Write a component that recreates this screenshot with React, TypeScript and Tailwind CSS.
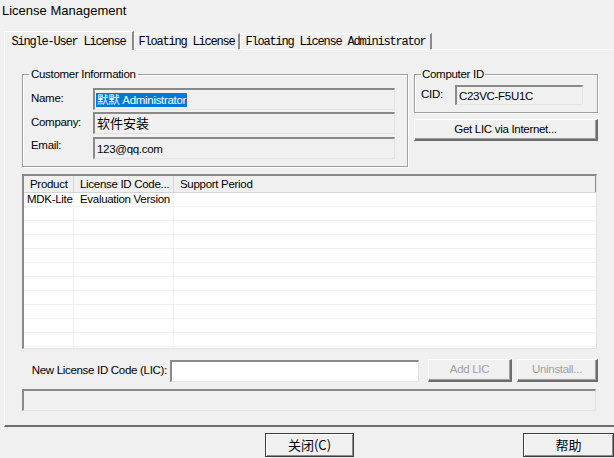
import React from "react";

const sunken =
  "border-t-2 border-l-2 border-t-[#8a8a8a] border-l-[#8a8a8a] border-r border-b border-r-[#e3e3e3] border-b-[#e3e3e3]";
const raised =
  "border-t border-l border-t-white border-l-white border-r-2 border-b-2 border-r-[#6d6d6d] border-b-[#6d6d6d] shadow-[inset_-1px_-1px_0_#a0a0a0]";
const groupBox =
  "border border-[#a0a0a0] shadow-[inset_1px_1px_0_white,1px_1px_0_white] rounded-none";

const rows = [
  ["MDK-Lite", "Evaluation Version", ""],
  ...Array.from({ length: 11 }, () => ["", "", ""]),
];

function Field({ children, width, height = 22 }: { children?: React.ReactNode; width: string; height?: number }) {
  return (
    <div
      className={`${sunken} ${width} ${height === 22 ? "h-[22px]" : "h-[20px]"} bg-[#f0f0f0] flex items-center pl-[1px] leading-[14px] whitespace-nowrap overflow-hidden`}
    >
      {children}
    </div>
  );
}

export default function App() {
  const tabFont = "font-['Liberation_Mono',monospace] text-[12px] tracking-[-1.2px] whitespace-nowrap";
  return (
    <div className="w-[614px] h-[458px] bg-[#f0f0f0] overflow-hidden font-['Liberation_Sans','Noto_Sans_CJK_SC',sans-serif] text-[11.5px] tracking-[-0.3px] text-black">
      {/* Title */}
      <div className="h-[31px] pl-[2px] pt-[3px] text-[13px] tracking-normal leading-[16px]">License Management</div>

      {/* Tabs */}
      <div className="flex items-end h-[18px] pl-[4px]">
        <div className={`relative z-10 w-[130px] h-[19px] -mb-[1px] bg-[#f0f0f0] border-t border-l border-white border-r-2 border-r-[#8a8a8a] flex items-start justify-center pt-[1px] ${tabFont}`}>
          Single-User License
        </div>
        <div className={`w-[106px] h-[16px] border-t border-l border-white border-r-2 border-r-[#8a8a8a] flex items-center justify-center ${tabFont}`}>
          Floating License
        </div>
        <div className={`w-[192px] h-[16px] border-t border-l border-white border-r-2 border-r-[#8a8a8a] flex items-center justify-center ${tabFont}`}>
          Floating License Administrator
        </div>
      </div>

      {/* Panel */}
      <div className="ml-[4px] w-[620px] h-[378px] border-t border-l border-white border-b-2 border-r-2 border-b-[#6d6d6d] border-r-[#6d6d6d] pl-[17px] pt-[17px]">
        <div className="flex items-start">
          {/* Customer Information */}
          <fieldset className={`${groupBox} w-[386px] h-[100px]`}>
            <legend className="ml-[6px] px-[2px] leading-[14px]">Customer Information</legend>
            <div className="flex flex-col pl-[8px] pt-[7px]">
              <div className="flex items-center">
                <span className="w-[62px]">Name:</span>
                <Field width="w-[302px]">
                  <span className="bg-[#0078d7] text-white px-[1px]">默默 Administrator</span>
                </Field>
              </div>
              <div className="flex items-center mt-[2px]">
                <span className="w-[62px]">Company:</span>
                <Field width="w-[302px]">
                  <span className="pl-[1px] text-[13px] tracking-normal">软件安装</span>
                </Field>
              </div>
              <div className="flex items-center mt-[3px]">
                <span className="w-[62px] -mt-[4px]">Email:</span>
                <Field width="w-[302px]">
                  <span className="pl-[1px]">123@qq.com</span>
                </Field>
              </div>
            </div>
          </fieldset>

          {/* Computer ID */}
          <div className="ml-[6px] flex flex-col">
            <fieldset className={`${groupBox} w-[184px] h-[46px]`}>
              <legend className="ml-[6px] px-[1px] leading-[14px]">Computer ID</legend>
              <div className="flex items-center pl-[6px] pt-[4px]">
                <span className="w-[34px]">CID:</span>
                <Field width="w-[128px]" height={20}>
                  <span className="pl-[1px]">C23VC-F5U1C</span>
                </Field>
              </div>
            </fieldset>
            <button className={`${raised} mt-[6px] w-[184px] h-[22px] bg-[#f0f0f0] flex items-center justify-center`}>
              Get LIC via Internet...
            </button>
          </div>
        </div>

        {/* License list */}
        <div className={`${sunken} mt-[7px] w-[575px] h-[175px] bg-white overflow-hidden`}>
          <div className="flex h-[17px] bg-[#f0f0f0] border-b border-[#d5d5d5] leading-[16px] whitespace-nowrap">
            <div className="w-[50px] pl-[6px] border-r border-[#d5d5d5] overflow-hidden">Product</div>
            <div className="w-[100px] pl-[6px] border-r border-[#d5d5d5] overflow-hidden">License ID Code...</div>
            <div className="flex-1 pl-[6px] border-r border-[#8a8a8a]">Support Period</div>
          </div>
          {rows.map((r, i) => (
            <div key={i} className="flex h-[14px] border-b border-[#f0f0f0] leading-[13px] whitespace-nowrap">
              <div className="w-[50px] pl-[3px] border-r border-[#f0f0f0]">{r[0]}</div>
              <div className="w-[100px] pl-[6px] border-r border-[#f0f0f0]">{r[1]}</div>
              <div className="flex-1">{r[2]}</div>
            </div>
          ))}
        </div>

        {/* LIC row */}
        <div className="flex items-center mt-[10px]">
          <span className="w-[145px] text-right whitespace-nowrap">New License ID Code (LIC):</span>
          <div className={`${sunken} ml-[3px] w-[249px] h-[22px] bg-white`} />
          <button className={`${raised} ml-[9px] w-[84px] h-[23px] bg-[#f0f0f0] text-[#a0a0a0]`}>
            Add LIC
          </button>
          <button className={`${raised} ml-[5px] w-[81px] h-[23px] bg-[#f0f0f0] text-[#a0a0a0]`}>
            Uninstall...
          </button>
        </div>

        {/* Status */}
        <div className={`${sunken} mt-[7px] w-[574px] h-[22px] bg-[#f0f0f0]`} />
      </div>

      {/* Bottom buttons */}
      <div className="flex mt-[6px]">
        <button className="ml-[265px] w-[90px] h-[24px] bg-[#f0f0f0] border border-[#3c3c3c] shadow-[inset_1px_1px_0_white,inset_-1px_-1px_0_#8a8a8a] text-[13px] tracking-normal font-['Noto_Sans_CJK_SC',sans-serif] leading-[20px]">
          关闭(C)
        </button>
        <button className="ml-[169px] w-[92px] h-[24px] bg-[#f0f0f0] border border-[#3c3c3c] shadow-[inset_1px_1px_0_white,inset_-1px_-1px_0_#8a8a8a] text-[13px] tracking-normal font-['Noto_Sans_CJK_SC',sans-serif] leading-[20px]">
          帮助
        </button>
      </div>
    </div>
  );
}
